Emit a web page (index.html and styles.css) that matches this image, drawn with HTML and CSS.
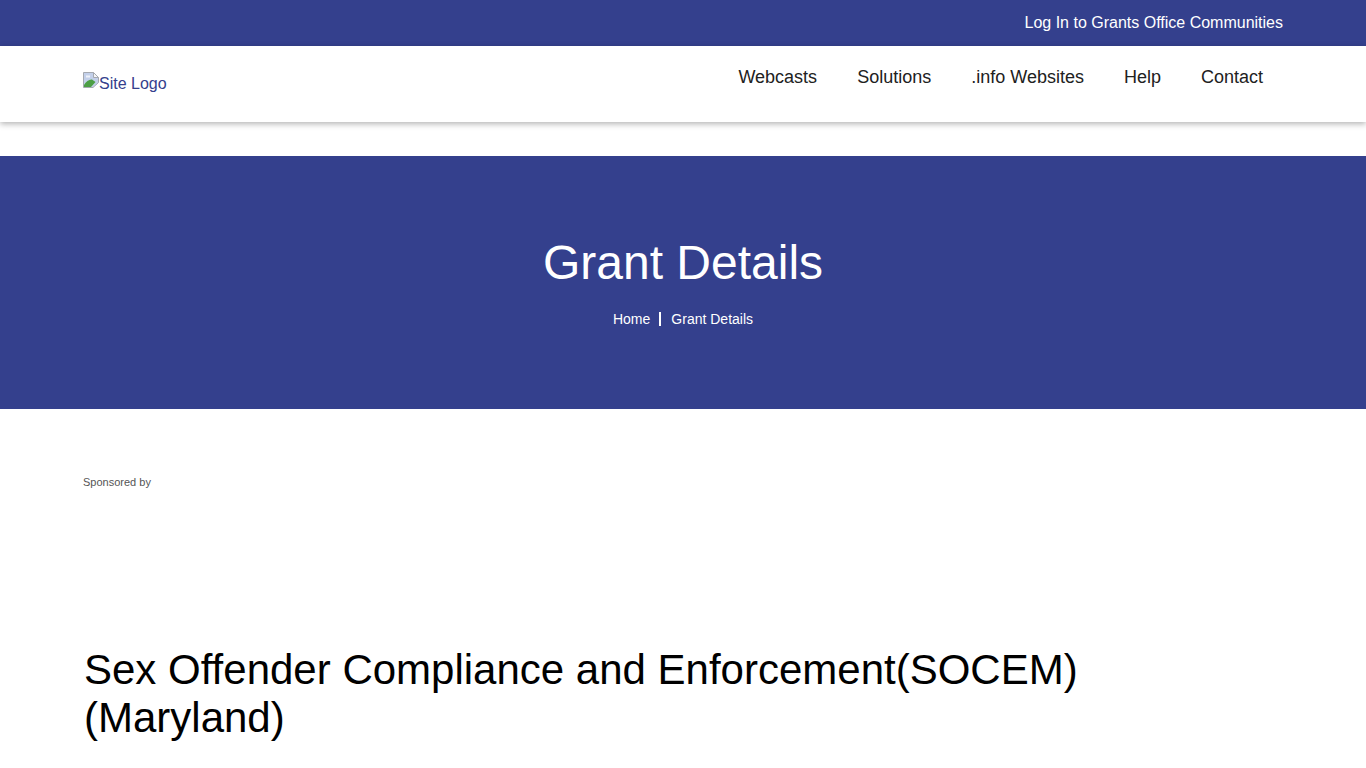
FILE: index.html
```html
<!DOCTYPE html>
<html lang="en">
<head>
<meta charset="utf-8">
<title>Grant Details</title>
<link rel="stylesheet" href="styles.css">
</head>
<body>
<div class="topbar"><a href="#" class="topbar-link">Log In to Grants Office Communities</a></div>
<header class="site-header">
  <a href="#" class="logo">
    <svg class="broken-icon" width="16" height="16" viewBox="0 0 16 16" aria-hidden="true">
      <path d="M0.5 0.5H10.5L15.5 5.5V10.5L10 15.5H0.5Z" fill="#c3d0ea" stroke="#a5a9b0"/>
      <path d="M10.5 0.5V5.5H15.5Z" fill="#f4f5f7" stroke="#a5a9b0"/>
      <path d="M1 15V13C3 9.5 6.5 7 9 7.5L12.5 10L8 15Z" fill="#4c9f45"/>
      <path d="M3 4.5H7" stroke="#eef2fa" stroke-width="2"/>
    </svg><span>Site Logo</span>
  </a>
  <nav class="main-nav">
    <a href="#">Webcasts</a>
    <a href="#">Solutions</a>
    <a href="#">.info Websites</a>
    <a href="#">Help</a>
    <a href="#">Contact</a>
  </nav>
</header>
<section class="hero">
  <h2 class="hero-title">Grant Details</h2>
  <div class="breadcrumb"><a href="#">Home</a><span class="crumb-sep"></span><span>Grant Details</span></div>
</section>
<main class="content">
  <p class="sponsored">Sponsored by</p>
  <h1 class="grant-title">Sex Offender Compliance and Enforcement(SOCEM)<br>(Maryland)</h1>
</main>
</body>
</html>
```
FILE: styles.css
```css
* { box-sizing: border-box; }
html, body { margin: 0; padding: 0; height: 768px; overflow: hidden; }
body { font-family: "Liberation Sans", Arial, sans-serif; background: #fff; color: #000; }
a { text-decoration: none; color: inherit; }

.topbar {
  height: 46px;
  background: #34408d;
  display: flex;
  justify-content: flex-end;
  align-items: center;
  padding-right: 83px;
}
.topbar-link { color: #fff; font-size: 16px; }

.site-header {
  height: 76px;
  background: #fff;
  box-shadow: 0 2px 6px rgba(0, 0, 0, 0.3);
  display: flex;
  justify-content: space-between;
  align-items: flex-start;
  padding: 0 103px 0 83px;
}
.logo {
  margin-top: 26px;
  display: flex;
  align-items: flex-start;
  color: #34408d;
  font-size: 16px;
  line-height: 23px;
}
.broken-icon { display: block; flex: none; }
.main-nav { display: flex; gap: 40px; margin-top: 20px; }
.main-nav a { font-size: 18px; line-height: 22px; color: #212121; }

.hero {
  margin-top: 34px;
  height: 253px;
  background: #34408d;
  color: #fff;
  display: flex;
  flex-direction: column;
  align-items: center;
  padding-top: 79px;
}
.hero-title { margin: 0; font-size: 48px; line-height: 56px; font-weight: 400; }
.breadcrumb {
  margin-top: 19px;
  display: flex;
  align-items: center;
  font-size: 14px;
  line-height: 18px;
}
.crumb-sep { width: 2px; height: 14px; background: #fff; margin: 0 10px 0 9px; }

.content { padding: 66px 83px 0 84px; }
.sponsored { margin: 0 0 0 -1px; font-size: 11px; line-height: 14px; color: #555; }
.grant-title {
  margin: 157px 0 0;
  font-size: 42px;
  line-height: 48px;
  font-weight: 400;
  color: #000;
}
```
